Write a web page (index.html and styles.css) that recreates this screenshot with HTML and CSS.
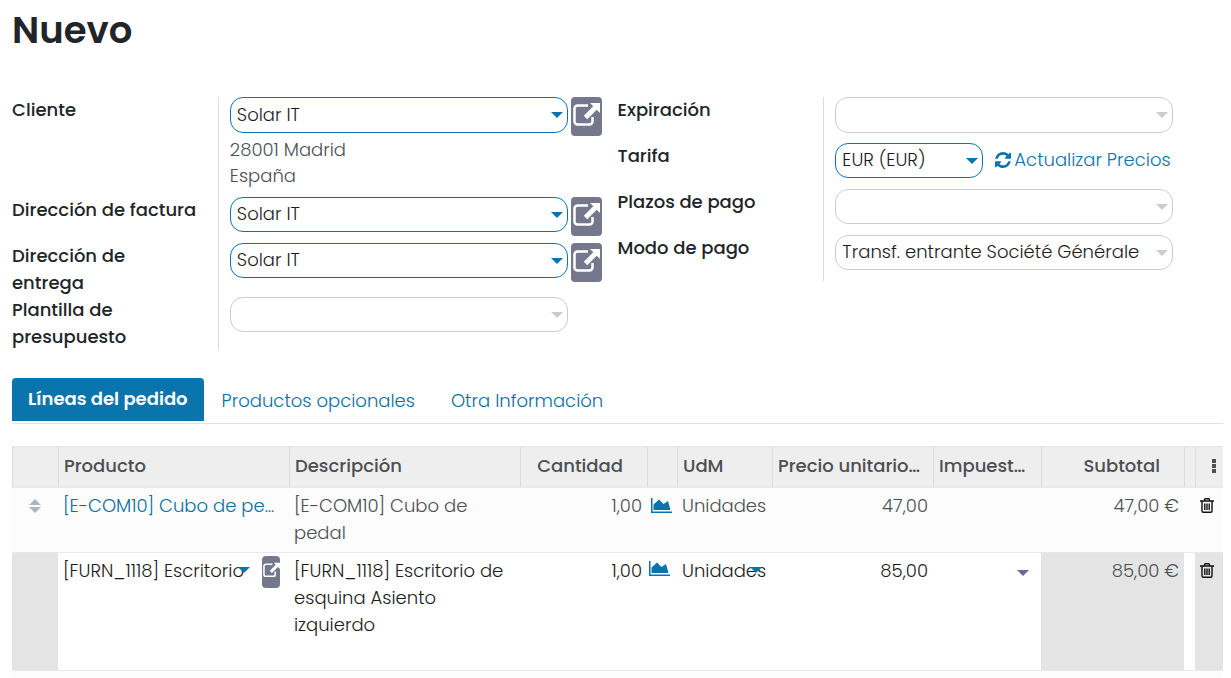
FILE: index.html
```
<!DOCTYPE html>
<html lang="es">
<head>
<meta charset="utf-8">
<meta name="viewport" content="width=device-width, initial-scale=1">
<title>Nuevo</title>
<link rel="stylesheet" href="styles.css">
</head>
<body>
<svg class="sprite" aria-hidden="true">
  <symbol id="i-ext" viewBox="0 0 27 23">
    <path d="M15 2.500H4.500a3 3 0 0 0-3 3V18.500a3 3 0 0 0 3 3h12a3 3 0 0 0 3-3V14" fill="none" stroke="currentColor" stroke-width="2.500"/>
    <path d="M17 0h10v10l-3.300-3.300-9.500 9.500-3.400-3.400 9.500-9.500z" fill="currentColor"/>
  </symbol>
  <symbol id="i-chart" viewBox="0 0 21 15">
    <path d="M.75 0v14.250H21" fill="none" stroke="currentColor" stroke-width="1.500"/>
    <path d="M2.500 12V6.500L8 1.500 12.500 6l4.500-3L19.500 12z" fill="currentColor"/>
  </symbol>
  <symbol id="i-trash" viewBox="0 0 14 15">
    <path d="M0 3h14M4.500 3V1.700Q4.500.7 5.500.7h3q1 0 1 1V3M2 3v10q0 1.300 1.300 1.300h7.400Q12 14.300 12 13V3M4.800 5.500v6.500M7 5.500v6.500M9.200 5.500v6.500" fill="none" stroke="currentColor" stroke-width="1.400"/>
  </symbol>
  <symbol id="i-sync" viewBox="0 0 1536 1536">
    <path fill="currentColor" d="M1511 928q0 5-1 7-64 268-268 434.500T764 1536q-146 0-282.500-55T238 1324l-129 129q-19 19-45 19t-45-19-19-45V960q0-26 19-45t45-19h448q26 0 45 19t19 45-19 45l-137 137q71 66 161 102t187 36q134 0 250-65t186-179q11-17 53-117 8-23 30-23h192q13 0 22.500 9.500t9.500 22.500zm25-800v448q0 26-19 45t-45 19h-448q-26 0-45-19t-19-45 19-45l138-138Q969 256 768 256q-134 0-250 65T332 500q-11 17-53 117-8 23-30 23H50q-13 0-22.500-9.500T18 608v-7q65-268 270-434.500T768 0q146 0 284 55.500T1297 212l130-129q19-19 45-19t45 19 19 45z"/>
  </symbol>
</svg>
<main class="sheet">
  <h1 class="title">Nuevo</h1>

  <div class="groups">
    <section class="group">
      <div class="row row-address">
        <label class="label" for="cliente">Cliente</label>
        <div class="field">
          <div class="control">
            <span class="drop"><select id="cliente" class="select"><option>Solar IT</option></select></span>
            <button class="ext" type="button" aria-label="Abrir cliente"><svg><use href="#i-ext"/></svg></button>
          </div>
          <div class="address">28001 Madrid<br>España</div>
        </div>
      </div>
      <div class="row">
        <label class="label" for="factura">Dirección de factura</label>
        <div class="field">
          <div class="control">
            <span class="drop"><select id="factura" class="select"><option>Solar IT</option></select></span>
            <button class="ext" type="button" aria-label="Abrir dirección de factura"><svg><use href="#i-ext"/></svg></button>
          </div>
        </div>
      </div>
      <div class="row row-tall">
        <label class="label" for="entrega">Dirección de<br>entrega</label>
        <div class="field">
          <div class="control">
            <span class="drop"><select id="entrega" class="select"><option>Solar IT</option></select></span>
            <button class="ext" type="button" aria-label="Abrir dirección de entrega"><svg><use href="#i-ext"/></svg></button>
          </div>
        </div>
      </div>
      <div class="row">
        <label class="label" for="plantilla">Plantilla de<br>presupuesto</label>
        <div class="field">
          <div class="control">
            <span class="drop optional"><select id="plantilla" class="select"><option></option></select></span>
          </div>
        </div>
      </div>
    </section>

    <section class="group">
      <div class="row">
        <label class="label" for="expiracion">Expiración</label>
        <div class="field"><div class="control">
          <span class="drop optional"><select id="expiracion" class="select"><option></option></select></span>
        </div></div>
      </div>
      <div class="row">
        <label class="label" for="tarifa">Tarifa</label>
        <div class="field"><div class="pricelist">
          <span class="drop drop-short"><select id="tarifa" class="select"><option>EUR (EUR)</option></select></span>
          <button class="update" type="button"><svg><use href="#i-sync"/></svg>Actualizar Precios</button>
        </div></div>
      </div>
      <div class="row">
        <label class="label" for="plazos">Plazos de pago</label>
        <div class="field"><div class="control">
          <span class="drop optional"><select id="plazos" class="select"><option></option></select></span>
        </div></div>
      </div>
      <div class="row">
        <label class="label" for="modo">Modo de pago</label>
        <div class="field"><div class="control">
          <span class="drop optional"><select id="modo" class="select"><option>Transf. entrante Société Générale</option></select></span>
        </div></div>
      </div>
    </section>
  </div>

  <nav class="tabs">
    <a class="tab tab-active" href="#lineas">Líneas del pedido</a>
    <a class="tab" href="#opcionales">Productos opcionales</a>
    <a class="tab" href="#otra">Otra Información</a>
  </nav>

  <table class="lines" id="lineas">
    <colgroup>
      <col class="c-handle"><col class="c-text"><col class="c-text"><col class="c-qty"><col class="c-chart"><col class="c-uom"><col class="c-price"><col class="c-tax"><col class="c-total"><col class="c-gap"><col class="c-del">
    </colgroup>
    <thead>
      <tr>
        <th></th><th>Producto</th><th>Descripción</th><th class="num">Cantidad</th><th></th><th>UdM</th><th>Precio unitario…</th><th>Impuest…</th><th class="num">Subtotal</th><th></th>
        <th class="menu"><button class="icon-btn" type="button" aria-label="Columnas opcionales"><svg class="kebab" viewBox="0 0 4 14"><path d="M0 0h4v4H0zM0 5h4v4H0zM0 10h4v4H0z" fill="currentColor"/></svg></button></th>
      </tr>
    </thead>
    <tbody>
      <tr class="line">
        <td class="handle"><svg class="sort" viewBox="0 0 12 14"><path d="M0 6l6-6 6 6zM0 8h12l-6 6z" fill="currentColor"/></svg></td>
        <td><a class="product" href="#cubo">[E-COM10] Cubo de pe…</a></td>
        <td>[E-COM10] Cubo de<br>pedal</td>
        <td class="num">1,00</td>
        <td class="chart"><button class="icon-btn" type="button" aria-label="Previsión"><svg><use href="#i-chart"/></svg></button></td>
        <td>Unidades</td>
        <td class="num">47,00</td>
        <td></td>
        <td class="num">47,00 €</td>
        <td></td>
        <td class="delete"><button class="icon-btn" type="button" aria-label="Eliminar línea"><svg><use href="#i-trash"/></svg></button></td>
      </tr>
      <tr class="line line-edit">
        <td class="readonly"></td>
        <td>
          <div class="cell-edit">
            <span class="drop drop-cell"><select class="select" aria-label="Producto"><option>[FURN_1118] Escritorio</option></select></span>
            <button class="ext ext-small" type="button" aria-label="Abrir producto"><svg><use href="#i-ext"/></svg></button>
          </div>
        </td>
        <td><textarea class="input" rows="3" aria-label="Descripción">[FURN_1118] Escritorio de
esquina Asiento
izquierdo</textarea></td>
        <td><input class="input num" aria-label="Cantidad" value="1,00"></td>
        <td class="chart chart-edit"><button class="icon-btn" type="button" aria-label="Previsión"><svg><use href="#i-chart"/></svg></button></td>
        <td><span class="drop drop-cell"><select class="select" aria-label="Unidad de medida"><option>Unidades</option></select></span></td>
        <td><input class="input num" aria-label="Precio unitario" value="85,00"></td>
        <td><span class="drop drop-cell drop-tax"><select class="select" aria-label="Impuestos"><option></option></select></span></td>
        <td class="num readonly">85,00 €</td>
        <td></td>
        <td class="delete readonly"><button class="icon-btn" type="button" aria-label="Eliminar línea"><svg><use href="#i-trash"/></svg></button></td>
      </tr>
      <tr class="line-empty"><td colspan="11"></td></tr>
    </tbody>
  </table>
</main>
</body>
</html>
```
FILE: styles.css
```
* { box-sizing: border-box; }

body {
  margin: 0;
  background: #fff;
  color: #4c4f53;
  font: 300 18px/27px Poppins, Inter, "Open Sans", sans-serif;
}

button, select, input, textarea {
  margin: 0;
  padding: 0;
  border: 0;
  background: none;
  color: inherit;
  font: inherit;
}

.sprite { display: none; }

.sheet { padding: 7px 8px 0 12px; }

.title {
  margin: 0 0 44px;
  color: #212529;
  font-size: 37px;
  font-weight: 600;
  line-height: 46px;
}

.groups {
  display: grid;
  grid-template-columns: 1fr 1fr;
  align-items: start;
}

.row {
  display: grid;
  grid-template-columns: 34% 1fr;
  min-height: 46px;
}

.row-address { min-height: 100px; }
.row-tall { min-height: 54px; }

.label {
  margin-top: -1px;
  color: #212529;
  font-weight: 500;
}

.field {
  padding: 0 16px 0 11px;
  border-left: 1px solid #ddd;
}

.control {
  display: grid;
  grid-template-columns: 1fr 31px;
  gap: 3px;
  align-items: start;
  height: 40px;
}

.pricelist {
  display: flex;
  align-items: center;
  gap: 12px;
}

.drop {
  position: relative;
  display: block;
  color: #0a75ac;
}

.drop::after {
  content: "";
  position: absolute;
  top: 15px;
  right: 5px;
  border: solid transparent;
  border-width: 6px 6px 0;
  border-top-color: currentColor;
  pointer-events: none;
}

.select {
  display: block;
  width: 100%;
  height: 35px;
  padding: 0 20px 2px 6px;
  border: 1px solid #0a75ac;
  border-radius: 13px;
  appearance: none;
  color: #1c1c1c;
}

.row:first-child .select { height: 36px; }

.optional { color: #ccc; }
.optional .select { border-color: #ccc; }
.drop-short { width: 148px; }

.address {
  line-height: 26px;
}

.ext {
  display: flex;
  justify-content: center;
  width: 31px;
  height: 39px;
  padding-top: 6px;
  border-radius: 4px;
  background: #75788c;
  color: #fff;
}

.ext svg { width: 27px; height: 23px; }

.update {
  display: flex;
  align-items: center;
  gap: 3px;
  padding-bottom: 2px;
  color: #0a75ac;
  white-space: nowrap;
}

.update svg { width: 16px; height: 16px; }

.tabs {
  display: flex;
  margin-top: 28px;
  border-bottom: 1px solid #dee2e6;
}

.tab {
  padding: 9px 18px;
  color: #0a6fa3;
  text-decoration: none;
  white-space: nowrap;
}

.tab-active {
  margin-bottom: 2px;
  padding: 7px 16px 9px;
  border-radius: 4px 4px 0 0;
  background: #0a75ac;
  color: #fff;
  font-weight: 600;
}

.lines {
  width: 100%;
  margin-top: 22px;
  border-collapse: separate;
  border-spacing: 0;
  table-layout: fixed;
}

.c-handle { width: 46px; }
.c-text { width: 231px; }
.c-qty { width: 127px; }
.c-chart { width: 30px; }
.c-uom { width: 95px; }
.c-price { width: 161px; }
.c-tax { width: 108px; }
.c-total { width: 143px; }
.c-gap { width: 11px; }
.c-del { width: 28px; }

.lines th {
  height: 42px;
  padding: 0 5px 2px;
  border-top: 1px solid #e4e4e4;
  border-left: 1px solid #dcdcdc;
  border-bottom: 2px solid #e6e9ed;
  background: #eee;
  font-weight: 500;
  text-align: left;
  white-space: nowrap;
}

.lines td {
  padding: 4px 5px 6px;
  border-bottom: 1px solid #e6e9ed;
  vertical-align: top;
  white-space: nowrap;
}

.lines th.num { padding-right: 24px; }
.lines .num { text-align: right; }
.lines .menu { padding: 0 7px 0 0; text-align: right; }

.line { height: 65px; background: #fcfcfc; }
.line-edit { height: 118px; background: #fff; color: #1c1c1c; }
.line .readonly { background: #e4e4e4; color: #4c4f53; }

.lines .line-empty td { height: 7px; padding: 0; border: 0; background: #fcfcfc; }

.product { color: #0a6fa3; text-decoration: none; }

.icon-btn { display: inline-block; line-height: 0; }
.kebab { width: 4px; height: 14px; }

.lines .handle { padding: 11px 17px; color: #adb5bd; line-height: 0; }
.sort { width: 12px; height: 14px; }

.lines .chart { padding: 10px 4px; color: #0a75ac; line-height: 0; }
.lines .chart-edit { padding: 8px 2px; }
.chart svg { width: 21px; height: 15px; }

.lines .delete { padding: 10px 5px; color: #111; line-height: 0; }
.delete svg { width: 14px; height: 15px; }

.cell-edit {
  display: flex;
  justify-content: space-between;
  height: 27px;
}

.cell-edit .drop { width: 192px; }

.drop-cell .select {
  height: 27px;
  padding: 0;
  border: 0;
  border-radius: 0;
}

.drop-cell::after { top: 10px; }
.drop-tax { color: #7460a5; }
.drop-tax::after { top: 13px; right: 7px; }

.ext-small {
  width: 18px;
  height: 32px;
  margin: -1px 4px 0 0;
  padding-top: 6px;
}

.ext-small svg { width: 17px; height: 16px; }

.input {
  display: block;
  width: 100%;
  height: 27px;
  resize: none;
}

textarea.input { height: 81px; overflow: hidden; }
```
